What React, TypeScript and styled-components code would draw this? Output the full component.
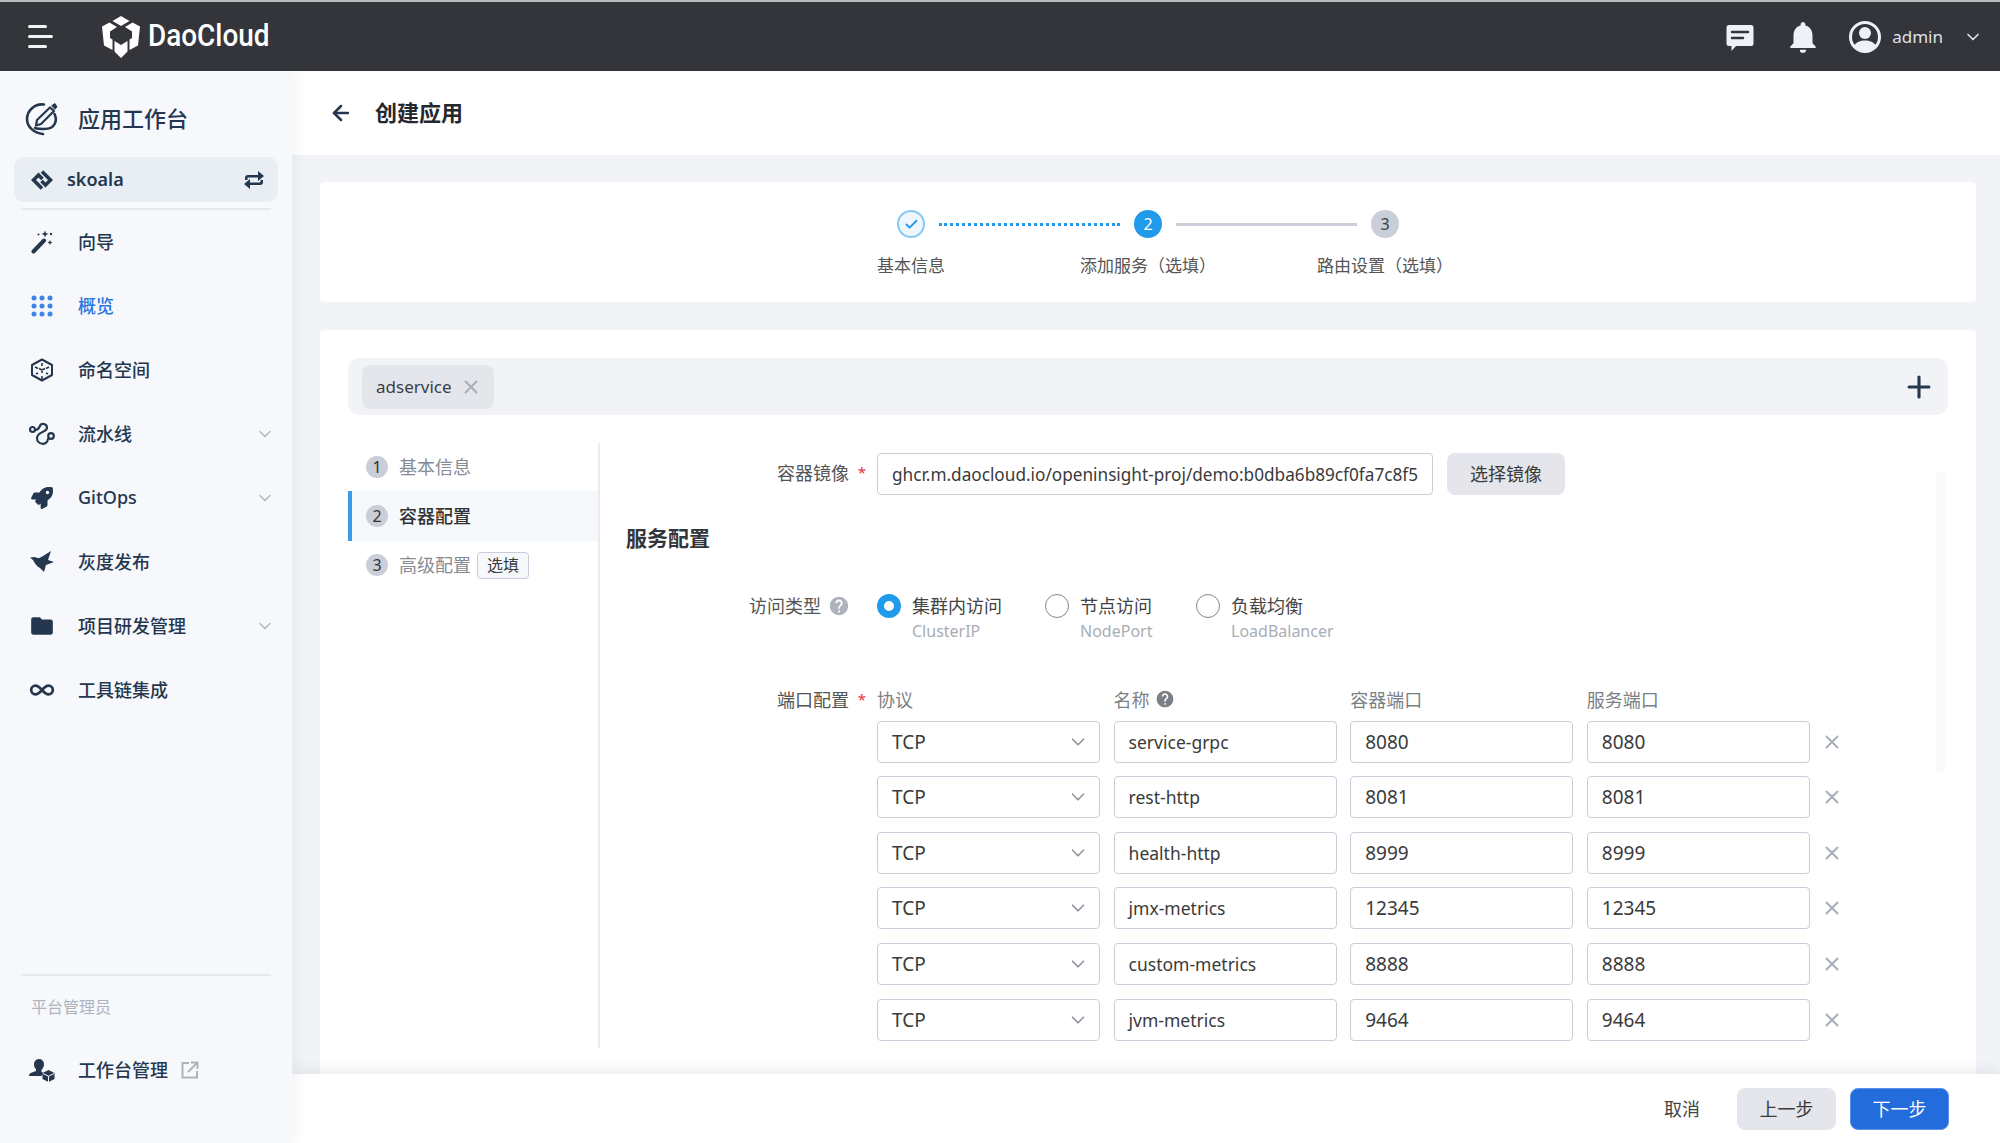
import React from 'react';
import styled, { createGlobalStyle } from 'styled-components';
import { ArrowLeft, Check, ChevronDown, Infinity as InfinityIcon, Plus, X } from 'lucide-react';
import { FaRocket } from 'react-icons/fa';
import { MdFolder, MdHelp, MdNotifications } from 'react-icons/md';

/*
 * Styles
 */
const GlobalStyle = createGlobalStyle`
  html, body { margin: 0; padding: 0; height: 100%; }
  body {
    font-family: "Noto Sans", "Noto Sans CJK SC", sans-serif;
    color: #3a3a3a;
    background: #f1f3f7;
  }
  * { box-sizing: border-box; }
`;

const Page = styled.div`
  width: 100%;
  height: 100vh;
  display: flex;
  flex-direction: column;
  overflow: hidden;
`;

const Header = styled.header`
  flex: 0 0 71px;
  display: flex;
  align-items: center;
  background: #33353b;
  border-top: 2px solid #b9bbbf;
  padding: 0 17px 0 28px;
  color: #eef1f6;
`;

const Burger = styled.div`
  width: 25px;
  display: flex;
  flex-direction: column;
  gap: 7px;
  margin-right: 49px;
  span {
    height: 3px;
    border-radius: 2px;
    background: #f2f4f8;
  }
  span:nth-child(1), span:nth-child(3) { width: 19px; }
`;

const Brand = styled.div`
  display: flex;
  align-items: center;
  gap: 8px;
  font-family: "Roboto", sans-serif;
  font-size: 31px;
  font-weight: 500;
  color: #ffffff;
  flex: 1;
`;

const BrandName = styled.span`
  display: inline-block;
  padding-bottom: 2px;
  transform: scaleX(0.9);
  transform-origin: left center;
`;

const HeaderActions = styled.div`
  display: flex;
  align-items: center;
  gap: 27px;
`;

const BellSlot = styled.span`
  display: flex;
  margin-left: 3px;
`;

const UserMenu = styled.div`
  display: flex;
  align-items: center;
`;

const UserName = styled.span`
  font-size: 17px;
  margin: 0 20px 0 11px;
  color: #dfe2e7;
`;

const Body = styled.div`
  flex: 1;
  display: flex;
  min-height: 0;
`;

const Sidebar = styled.aside`
  flex: 0 0 292px;
  display: flex;
  flex-direction: column;
  background: #f6f8fc;
  box-shadow: 4px 0 12px rgba(40, 50, 70, 0.06);
  padding-bottom: 41px;
  z-index: 2;
  color: #25374f;
`;

const WorkbenchTitle = styled.div`
  height: 86px;
  display: flex;
  align-items: center;
  gap: 19px;
  padding: 10px 0 0 25px;
  font-size: 22px;
  font-weight: 500;
  span { padding-bottom: 5px; }
`;

const SpaceSelector = styled.div`
  height: 45px;
  margin: 0 14px;
  padding: 0 13px 0 17px;
  display: flex;
  align-items: center;
  background: #e9eef5;
  border-radius: 10px;
  font-size: 18px;
  font-weight: 600;
`;

const SpaceName = styled.span`
  flex: 1;
  margin-left: 14px;
  padding-bottom: 2px;
`;

const Divider = styled.div`
  height: 2px;
  margin: 6px 21px 0;
  background: #e6e9ef;
  flex-shrink: 0;
`;

const NavList = styled.nav`
  display: flex;
  flex-direction: column;
`;

const NavItem = styled.div<{ $active?: boolean }>`
  height: 64px;
  display: flex;
  align-items: center;
  padding: 0 17px 0 29px;
  font-size: 18px;
  font-weight: 500;
  color: ${p => (p.$active ? '#2b75e0' : '#25374f')};
`;

const NavIcon = styled.span`
  width: 26px;
  height: 26px;
  display: flex;
  align-items: center;
  justify-content: center;
  margin-right: 23px;
  flex-shrink: 0;
`;

const NavLabel = styled.span`
  flex: 1;
  padding-bottom: 2px;
`;

const AdminLabel = styled.span`
  padding-bottom: 2px;
`;

const ExternalMark = styled.span`
  display: flex;
  margin-left: 13px;
`;

const SidebarFooter = styled.div`
  margin-top: auto;
`;

const FooterCaption = styled.div`
  height: 62px;
  padding: 18px 0 0 31px;
  font-size: 16px;
  color: #aeb4bd;
`;

const Main = styled.main`
  flex: 1;
  min-width: 0;
  display: flex;
  flex-direction: column;
  position: relative;
`;

const TitleBar = styled.div`
  flex: 0 0 84px;
  display: flex;
  align-items: center;
  gap: 22px;
  padding: 0 0 0 37px;
  background: #ffffff;
  font-size: 22px;
  font-weight: 600;
  color: #25282e;
  span { padding-bottom: 5px; }
`;

const Content = styled.div`
  flex: 1;
  min-height: 0;
  overflow: hidden;
  padding: 27px 24px 0 28px;
`;

const StepperCard = styled.section`
  height: 120px;
  background: #ffffff;
  border-radius: 4px;
  padding-top: 28px;
`;

const StepperTrack = styled.div`
  display: flex;
  align-items: center;
  justify-content: center;
  gap: 14px;
`;

const StepDot = styled.div<{ $state: 'done' | 'current' | 'todo' }>`
  width: 28px;
  height: 28px;
  border-radius: 50%;
  display: flex;
  align-items: center;
  justify-content: center;
  font-size: 16px;
  background: ${p => (p.$state === 'done' ? '#eef7fe' : p.$state === 'current' ? '#209aea' : '#c9ced9')};
  color: ${p => (p.$state === 'current' ? '#ffffff' : p.$state === 'done' ? '#209aea' : '#3a3f49')};
  border: ${p => (p.$state === 'done' ? '2px solid #86c9f5' : 'none')};
`;

const StepLine = styled.div<{ $dotted?: boolean }>`
  width: 181px;
  border-top: 3px ${p => (p.$dotted ? 'dotted #209aea' : 'solid #c9ced9')};
`;

const StepperLabels = styled.div`
  display: grid;
  grid-template-columns: repeat(3, 237px);
  justify-content: center;
  margin-top: 14px;
  text-align: center;
  font-size: 17px;
  color: #555;
`;

const EditorCard = styled.section`
  margin-top: 28px;
  height: 800px;
  background: #ffffff;
  border-radius: 4px;
  padding: 28px;
`;

const ServiceTabs = styled.div`
  height: 57px;
  display: flex;
  align-items: center;
  justify-content: space-between;
  padding: 0 12px 0 14px;
  background: #f1f3f7;
  border-radius: 12px;
  color: #25374f;
`;

const ServiceChip = styled.div`
  width: 132px;
  height: 44px;
  display: flex;
  align-items: center;
  gap: 8px;
  padding-left: 14px;
  background: #e4e6eb;
  border-radius: 8px;
  font-size: 17px;
  color: #3a3f47;
`;

const EditorBody = styled.div`
  display: flex;
  height: 605px;
  margin-top: 28px;
`;

const SideSteps = styled.div`
  flex: 0 0 252px;
  border-right: 2px solid #eaecf2;
`;

const SideStep = styled.div<{ $active?: boolean }>`
  height: ${p => (p.$active ? '50px' : '48px')};
  display: flex;
  align-items: center;
  gap: 11px;
  padding-left: 14px;
  font-size: 18px;
  font-weight: ${p => (p.$active ? 500 : 400)};
  color: ${p => (p.$active ? '#333' : '#868b94')};
  background: ${p => (p.$active ? '#f5f9fc' : 'transparent')};
  border-left: 4px solid ${p => (p.$active ? '#3b9bea' : 'transparent')};
`;

const SideStepText = styled.span`
  padding-bottom: 2px;
`;

const StepNumber = styled.span`
  width: 22px;
  height: 22px;
  border-radius: 50%;
  display: flex;
  align-items: center;
  justify-content: center;
  background: #c9ced9;
  color: #333;
  font-size: 16px;
  font-weight: 400;
`;

const OptionalTag = styled.span`
  height: 27px;
  width: 52px;
  margin-left: -5px;
  padding-bottom: 2px;
  display: flex;
  align-items: center;
  justify-content: center;
  background: #f7f8fb;
  border: 1.5px solid #c6ccd9;
  border-radius: 4px;
  font-size: 16px;
  color: #3a3a3a;
`;

const FormPane = styled.div`
  flex: 1;
  position: relative;
  padding: 10px 0 0 26px;
`;

const ScrollThumb = styled.div`
  position: absolute;
  top: 28px;
  right: 3px;
  width: 9px;
  height: 302px;
  background: #fafafa;
  border-radius: 4px;
`;

const FormRow = styled.div<{ $top?: number }>`
  display: flex;
  margin-top: ${p => p.$top ?? 0}px;
`;

const FieldLabel = styled.div<{ $height?: number }>`
  flex: 0 0 251px;
  height: ${p => p.$height ?? 40}px;
  display: flex;
  align-items: center;
  justify-content: flex-end;
  padding: 0 10px 2px 0;
  font-size: 18px;
  color: #555;
`;

const RequiredMark = styled.span`
  width: 10px;
  margin-left: 8px;
  color: #e5323c;
  font-size: 15px;
  text-align: center;
`;

const HelpMark = styled.span`
  display: flex;
  margin: 2px 17px 0 7px;
  color: #aeb3bc;
`;

const Field = styled.div<{ $width?: number; $size?: number }>`
  width: ${p => (p.$width ? `${p.$width}px` : '223px')};
  height: 42px;
  display: flex;
  align-items: center;
  justify-content: space-between;
  padding: 0 10px 0 14px;
  background: #ffffff;
  border: 1.5px solid #c9cedb;
  border-radius: 4px;
  font-size: ${p => p.$size ?? 17.5}px;
  color: #3a3a3a;
  white-space: nowrap;
  overflow: hidden;
`;

const SecondaryButton = styled.div<{ $width: number; $gap?: number }>`
  width: ${p => p.$width}px;
  height: 42px;
  margin-left: ${p => p.$gap ?? 0}px;
  padding-bottom: 2px;
  display: flex;
  align-items: center;
  justify-content: center;
  background: #e4e6eb;
  border-radius: 8px;
  font-size: 18px;
  color: #3a3a3a;
`;

const PrimaryButton = styled(SecondaryButton)`
  background: #236cdc;
  border: 1px solid #5a93e8;
  color: #ffffff;
`;

const SectionTitle = styled.h2`
  margin: 29px 0 0;
  height: 28px;
  line-height: 28px;
  font-size: 21px;
  font-weight: 600;
  color: #33363b;
`;

const RadioGroup = styled.div`
  display: flex;
  height: 48px;
`;

const RadioOption = styled.div<{ $width: number }>`
  width: ${p => p.$width}px;
  display: grid;
  grid-template-columns: 24px 1fr;
  column-gap: 11px;
  row-gap: 1px;
  align-items: center;
`;

const RadioCircle = styled.span<{ $on?: boolean }>`
  width: 24px;
  height: 24px;
  border-radius: 50%;
  background: #ffffff;
  border: ${p => (p.$on ? '7px solid #209aea' : '1.5px solid #80858f')};
`;

const RadioTitle = styled.span`
  font-size: 18px;
  line-height: 24px;
  color: #444;
`;

const RadioHint = styled.span`
  grid-column: 2;
  font-size: 16px;
  line-height: 22px;
  color: #a9adb4;
`;

const PortGrid = styled.div`
  display: grid;
  grid-template-columns: repeat(4, 223px) 24px;
  column-gap: 13.6px;
  row-gap: 13.6px;
  align-items: center;
`;

const ColumnHead = styled.div`
  display: flex;
  align-items: center;
  gap: 5px;
  height: 30px;
  margin-bottom: -8px;
  padding-bottom: 2px;
  font-size: 18px;
  color: #7b7f86;
`;

const RemoveButton = styled.div`
  display: flex;
  justify-content: center;
  margin-left: -6px;
  color: #a9afb9;
`;

const ActionBar = styled.footer`
  position: absolute;
  left: 0;
  right: 0;
  bottom: 0;
  height: 69px;
  display: flex;
  align-items: center;
  justify-content: flex-end;
  gap: 14px;
  padding-right: 51px;
  background: #ffffff;
  box-shadow: 0 -4px 12px rgba(40, 50, 70, 0.08);
`;

const CancelLink = styled.span`
  margin-right: 23px;
  padding-bottom: 2px;
  font-size: 18px;
  color: #444;
`;

/*
 * Icons
 */
const LogoIcon = () => (
  <svg width="38" height="42" viewBox="0 0 38 42" fill="#fff">
    <polygon points="19,0 27.500,5 19,10 10.500,5" />
    <polygon points="7.500,6.500 15,11 8,15.500 8,22 10.500,23.500 10.500,34 2,29.500 0,10.500" />
    <polygon points="30.500,6.500 23,11 30,15.500 30,22 27.500,23.500 27.500,34 36,29.500 38,10.500" />
    <polygon points="12.500,25 19,29 25.500,25 25.500,35.500 19,42 12.500,35.500" />
  </svg>
);

const MessageIcon = () => (
  <svg width="28" height="33" viewBox="0 -4 28 33">
    <path d="M3 1h22a2.500 2.500 0 0 1 2.500 2.500v16a2.500 2.500 0 0 1-2.500 2.500H10l-4.500 5V22H3a2.500 2.500 0 0 1-2.500-2.500v-16A2.500 2.500 0 0 1 3 1z" fill="#eef1f6" />
    <path d="M6 8h16M6 14h11" stroke="#33353b" strokeWidth="2.500" strokeLinecap="round" />
  </svg>
);

const AvatarIcon = () => (
  <svg width="32" height="32" viewBox="0 0 32 32">
    <circle cx="16" cy="16" r="14.500" fill="none" stroke="#eef1f6" strokeWidth="3" />
    <circle cx="16" cy="12" r="6" fill="#eef1f6" />
    <path d="M5 25c2-4 6.500-5.500 11-5.500S25 21 27 25c-2.500 3-6.500 5-11 5s-8.500-2-11-5z" fill="#eef1f6" />
  </svg>
);

const WorkbenchIcon = () => (
  <svg width="34" height="34" viewBox="0 0 34 34" fill="none" stroke="#25374f" strokeWidth="2.600" strokeLinecap="round" strokeLinejoin="round">
    <path d="M19 2.500A15 15 0 0 0 2 17c0 8 7 14 16 15" />
    <path d="M29.500 12c3 6 1 15-10 15-4 0-7 0-9.500-1" />
    <path d="M12 18L25 5.500l4 3.500-13 13-5 1.500z" strokeWidth="2.200" />
    <path d="M27 3.500L30 1.500 32 5l-2 2z" fill="#25374f" strokeWidth="1" />
  </svg>
);

const SpaceIcon = () => (
  <svg width="22" height="22" viewBox="0 0 22 22" fill="none" stroke="#25374f" strokeWidth="3.600">
    <path d="M11 2.500l8.500 8.500-5 5-4-4" />
    <path d="M11 19.500L2.500 11l5-5 4 4" />
  </svg>
);

const SwapIcon = () => (
  <svg width="22" height="20" viewBox="0 0 22 20" fill="#25374f">
    <path d="M2 10V8a3 3 0 0 1 3-3h10V1l6 5-6 5V7.500H5.500A1 1 0 0 0 4.500 8.500V10z" />
    <path d="M20 10v2a3 3 0 0 1-3 3H7v4l-6-5 6-5v3.500h9.500a1 1 0 0 0 1-1V10z" />
  </svg>
);

const WandIcon = () => (
  <svg width="24" height="24" viewBox="0 0 24 24" fill="#25374f">
    <path d="M3.500 21.500L14 10.500" stroke="#25374f" strokeWidth="4" strokeLinecap="round" />
    <path d="M15 0.500l1 2.500 2.500 1-2.500 1-1 2.500-1-2.500-2.500-1 2.500-1z" />
    <circle cx="21" cy="4" r="1.200" />
    <path d="M20 10l.8 1.700 1.700.8-1.700.8-.8 1.700-.8-1.700-1.700-.8 1.700-.8z" />
    <circle cx="8.500" cy="4.500" r="1" />
  </svg>
);

const DotsIcon = () => (
  <svg width="22" height="22" viewBox="0 0 22 22" fill="#3f86e6">
    {[3, 11, 19].map(y => [3, 11, 19].map(x => <circle key={`${x}-${y}`} cx={x} cy={y} r="2.500" />))}
  </svg>
);

const CubeIcon = () => (
  <svg width="24" height="24" viewBox="0 0 24 24" fill="none" stroke="#25374f" strokeWidth="2" strokeLinejoin="round">
    <path d="M12 1.500l10 5.500v10l-10 5.500L2 17V7z" />
    <path d="M12 5v3M12 13v2M12 18v3M5 9l3 1.500M19 9l-3 1.500M12 12l-3-1.500M12 12l3-1.500M6 16l2-1M18 16l-2-1" strokeWidth="1.600" />
  </svg>
);

const PipelineIcon = () => (
  <svg width="26" height="24" viewBox="0 0 26 24" fill="none" stroke="#25374f" strokeWidth="2.200" strokeLinecap="round">
    <circle cx="3.500" cy="7.500" r="2.500" />
    <circle cx="22" cy="14" r="2.800" />
    <path d="M6.500 8C9 8 10 6 11 4c1-3 7-3 7 2 0 4-10 4-10 10 0 7 10 8 11 1" />
  </svg>
);

const BirdIcon = () => (
  <svg width="25" height="22" viewBox="0 0 25 22" fill="#25374f">
    <path d="M0 6.500L5 6c3 2 5 1 8-1l8-5-3 9 6 2-8 3-2 7-4-4c-4-2-6-6-7-8z" />
  </svg>
);

const AdminIcon = () => (
  <svg width="26" height="24" viewBox="0 0 26 24" fill="#25374f">
    <path d="M10 1a5 5 0 0 1 5 5c0 3-1.500 5-2.500 6v2l2 1-2 3H0c0-2 1-3 3-3.500l4-1.500v-2C6 10.500 5 9 5 6a5 5 0 0 1 5-5z" />
    <path d="M19.500 12l6 3v6l-6 3-6-3v-6z" />
    <path d="M14 15.500l5.500 2.700 5.500-2.700M19.500 18.200V24" stroke="#f6f8fc" strokeWidth="1" fill="none" />
  </svg>
);

const ExternalIcon = () => (
  <svg width="18" height="18" viewBox="0 0 18 18" fill="none" stroke="#aeb4bd" strokeWidth="2">
    <path d="M8 2H1.500v14.500H16V10" />
    <path d="M7 11l9-9M10 1.500h6.500V8" />
  </svg>
);

/*
 * Data
 */
const navItems = [
  { label: '向导', icon: <WandIcon /> },
  { label: '概览', icon: <DotsIcon />, active: true },
  { label: '命名空间', icon: <CubeIcon /> },
  { label: '流水线', icon: <PipelineIcon />, expandable: true },
  { label: 'GitOps', icon: <FaRocket size={22} />, expandable: true },
  { label: '灰度发布', icon: <BirdIcon /> },
  { label: '项目研发管理', icon: <MdFolder size={30} />, expandable: true },
  { label: '工具链集成', icon: <InfinityIcon size={28} strokeWidth={2.5} /> },
];

const ports = [
  { name: 'service-grpc', port: '8080' },
  { name: 'rest-http', port: '8081' },
  { name: 'health-http', port: '8999' },
  { name: 'jmx-metrics', port: '12345' },
  { name: 'custom-metrics', port: '8888' },
  { name: 'jvm-metrics', port: '9464' },
];

const accessTypes = [
  { title: '集群内访问', hint: 'ClusterIP', width: 168, on: true },
  { title: '节点访问', hint: 'NodePort', width: 151 },
  { title: '负载均衡', hint: 'LoadBalancer', width: 160 },
];

/*
 * Component
 */
export default function App() {
  return (
    <Page>
      <GlobalStyle />
      <Header>
        <Burger><span /><span /><span /></Burger>
        <Brand>
          <LogoIcon />
          <BrandName>DaoCloud</BrandName>
        </Brand>
        <HeaderActions>
          <MessageIcon />
          <BellSlot><MdNotifications size={38} color="#eef1f6" /></BellSlot>
          <UserMenu>
            <AvatarIcon />
            <UserName>admin</UserName>
            <ChevronDown size={20} color="#dfe2e7" />
          </UserMenu>
        </HeaderActions>
      </Header>

      <Body>
        <Sidebar>
          <WorkbenchTitle><WorkbenchIcon /><span>应用工作台</span></WorkbenchTitle>
          <SpaceSelector>
            <SpaceIcon />
            <SpaceName>skoala</SpaceName>
            <SwapIcon />
          </SpaceSelector>
          <Divider />
          <NavList>
            {navItems.map(item => (
              <NavItem key={item.label} $active={item.active}>
                <NavIcon>{item.icon}</NavIcon>
                <NavLabel>{item.label}</NavLabel>
                {item.expandable && <ChevronDown size={20} color="#aeb4bd" strokeWidth={1.5} />}
              </NavItem>
            ))}
          </NavList>
          <SidebarFooter>
            <Divider />
            <FooterCaption>平台管理员</FooterCaption>
            <NavItem>
              <NavIcon><AdminIcon /></NavIcon>
              <AdminLabel>工作台管理</AdminLabel>
              <ExternalMark><ExternalIcon /></ExternalMark>
            </NavItem>
          </SidebarFooter>
        </Sidebar>

        <Main>
          <TitleBar>
            <ArrowLeft size={24} strokeWidth={2.5} color="#25374f" />
            <span>创建应用</span>
          </TitleBar>
          <Content>
            <StepperCard>
              <StepperTrack>
                <StepDot $state="done"><Check size={15} strokeWidth={3} /></StepDot>
                <StepLine $dotted />
                <StepDot $state="current">2</StepDot>
                <StepLine />
                <StepDot $state="todo">3</StepDot>
              </StepperTrack>
              <StepperLabels>
                <span>基本信息</span>
                <span>添加服务（选填）</span>
                <span>路由设置（选填）</span>
              </StepperLabels>
            </StepperCard>

            <EditorCard>
              <ServiceTabs>
                <ServiceChip>adservice<X size={22} color="#a9afb9" strokeWidth={2.2} /></ServiceChip>
                <Plus size={34} strokeWidth={2.2} />
              </ServiceTabs>
              <EditorBody>
                <SideSteps>
                  <SideStep><StepNumber>1</StepNumber><SideStepText>基本信息</SideStepText></SideStep>
                  <SideStep $active><StepNumber>2</StepNumber><SideStepText>容器配置</SideStepText></SideStep>
                  <SideStep><StepNumber>3</StepNumber><SideStepText>高级配置</SideStepText><OptionalTag>选填</OptionalTag></SideStep>
                </SideSteps>
                <FormPane>
                  <ScrollThumb />
                  <FormRow>
                    <FieldLabel>容器镜像<RequiredMark>*</RequiredMark></FieldLabel>
                    <Field $width={556} $size={17.2}>ghcr.m.daocloud.io/openinsight-proj/demo:b0dba6b89cf0fa7c8f5</Field>
                    <SecondaryButton $width={118} $gap={14}>选择镜像</SecondaryButton>
                  </FormRow>
                  <SectionTitle>服务配置</SectionTitle>
                  <FormRow $top={42}>
                    <FieldLabel $height={24}>访问类型<HelpMark><MdHelp size={22} /></HelpMark></FieldLabel>
                    <RadioGroup>
                      {accessTypes.map(type => (
                        <RadioOption key={type.hint} $width={type.width}>
                          <RadioCircle $on={type.on} />
                          <RadioTitle>{type.title}</RadioTitle>
                          <RadioHint>{type.hint}</RadioHint>
                        </RadioOption>
                      ))}
                    </RadioGroup>
                  </FormRow>
                  <FormRow $top={43}>
                    <FieldLabel $height={30}>端口配置<RequiredMark>*</RequiredMark></FieldLabel>
                    <PortGrid>
                      <ColumnHead>协议</ColumnHead>
                      <ColumnHead>名称<MdHelp size={20} color="#7b7f86" /></ColumnHead>
                      <ColumnHead>容器端口</ColumnHead>
                      <ColumnHead>服务端口</ColumnHead>
                      <span />
                      {ports.map(row => (
                        <React.Fragment key={row.name}>
                          <Field $size={19}>TCP<ChevronDown size={22} color="#8e939c" strokeWidth={1.8} /></Field>
                          <Field>{row.name}</Field>
                          <Field $size={19}>{row.port}</Field>
                          <Field $size={19}>{row.port}</Field>
                          <RemoveButton><X size={22} strokeWidth={2.2} /></RemoveButton>
                        </React.Fragment>
                      ))}
                    </PortGrid>
                  </FormRow>
                </FormPane>
              </EditorBody>
            </EditorCard>
          </Content>
          <ActionBar>
            <CancelLink>取消</CancelLink>
            <SecondaryButton $width={99}>上一步</SecondaryButton>
            <PrimaryButton $width={99}>下一步</PrimaryButton>
          </ActionBar>
        </Main>
      </Body>
    </Page>
  );
}
